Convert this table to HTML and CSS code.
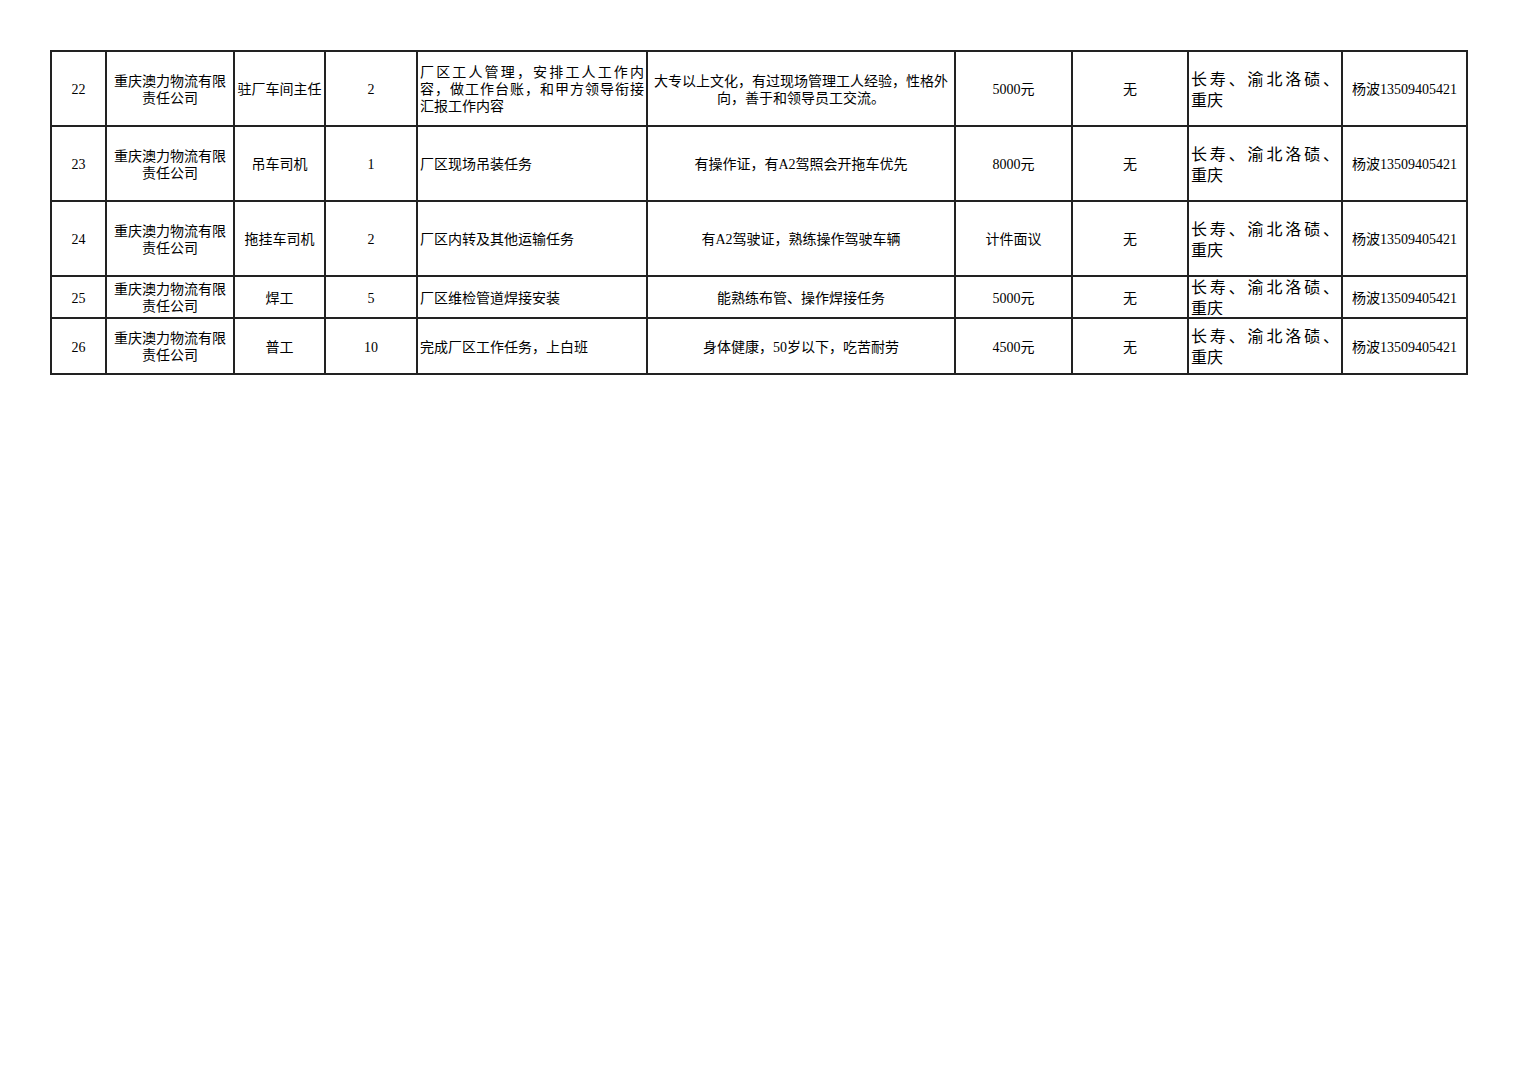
FILE: index.html
```html
<!DOCTYPE html>
<html lang="zh-CN">
<head>
<meta charset="utf-8">
<title>招聘信息</title>
<link rel="stylesheet" href="styles.css">
</head>
<body>
<table class="jobs">
  <colgroup>
    <col class="c1"><col class="c2"><col class="c3"><col class="c4"><col class="c5">
    <col class="c6"><col class="c7"><col class="c8"><col class="c9"><col class="c10">
  </colgroup>
  <tbody>
    <tr class="r-tall">
      <td>22</td>
      <td>重庆澳力物流有限<br>责任公司</td>
      <td>驻厂车间主任</td>
      <td>2</td>
      <td class="left"><span class="j">厂区工人管理，安排工人工作内</span><span class="j">容，做工作台账，和甲方领导衔接</span>汇报工作内容</td>
      <td>大专以上文化，有过现场管理工人经验，性格外<br>向，善于和领导员工交流。</td>
      <td>5000元</td>
      <td>无</td>
      <td class="loc"><span class="j">长寿、渝北洛碛、</span>重庆</td>
      <td>杨波13509405421</td>
    </tr>
    <tr class="r-tall">
      <td>23</td>
      <td>重庆澳力物流有限<br>责任公司</td>
      <td>吊车司机</td>
      <td>1</td>
      <td class="left">厂区现场吊装任务</td>
      <td>有操作证，有A2驾照会开拖车优先</td>
      <td>8000元</td>
      <td>无</td>
      <td class="loc"><span class="j">长寿、渝北洛碛、</span>重庆</td>
      <td>杨波13509405421</td>
    </tr>
    <tr class="r-tall">
      <td>24</td>
      <td>重庆澳力物流有限<br>责任公司</td>
      <td>拖挂车司机</td>
      <td>2</td>
      <td class="left">厂区内转及其他运输任务</td>
      <td>有A2驾驶证，熟练操作驾驶车辆</td>
      <td>计件面议</td>
      <td>无</td>
      <td class="loc"><span class="j">长寿、渝北洛碛、</span>重庆</td>
      <td>杨波13509405421</td>
    </tr>
    <tr class="r-short">
      <td>25</td>
      <td>重庆澳力物流有限<br>责任公司</td>
      <td>焊工</td>
      <td>5</td>
      <td class="left">厂区维检管道焊接安装</td>
      <td>能熟练布管、操作焊接任务</td>
      <td>5000元</td>
      <td>无</td>
      <td class="loc tight"><div class="clip"><span class="j">长寿、渝北洛碛、</span>重庆</div></td>
      <td>杨波13509405421</td>
    </tr>
    <tr class="r-mid">
      <td>26</td>
      <td>重庆澳力物流有限<br>责任公司</td>
      <td>普工</td>
      <td>10</td>
      <td class="left">完成厂区工作任务，上白班</td>
      <td>身体健康，50岁以下，吃苦耐劳</td>
      <td>4500元</td>
      <td>无</td>
      <td class="loc"><span class="j">长寿、渝北洛碛、</span>重庆</td>
      <td>杨波13509405421</td>
    </tr>
  </tbody>
</table>
</body>
</html>
```

FILE: styles.css
```css
html, body {
  margin: 0;
  padding: 0;
  background: #ffffff;
}

body {
  font-family: "Liberation Serif", "Noto Sans CJK SC", serif;
  color: #000000;
}

.jobs {
  margin: 50px 0 0 50px;
  border-collapse: collapse;
  table-layout: fixed;
  width: 1416px;
}

.c1 { width: 55px; }
.c2 { width: 128px; }
.c3 { width: 91px; }
.c4 { width: 92px; }
.c5 { width: 230px; }
.c6 { width: 308px; }
.c7 { width: 117px; }
.c8 { width: 116px; }
.c9 { width: 154px; }
.c10 { width: 125px; }

.jobs td {
  border: 2px solid #222222;
  padding: 2px 2px 0 2px;
  text-align: center;
  vertical-align: middle;
  font-size: 14px;
  line-height: 17px;
  white-space: nowrap;
  overflow: hidden;
}

.r-tall { height: 75px; }
.r-short { height: 42px; }
.r-mid { height: 56px; }

.jobs td.left {
  text-align: left;
  padding-left: 2px;
}

.jobs td.loc {
  text-align: left;
  font-size: 16px;
  line-height: 21px;
  padding: 2px 2px 0 2px;
}

.jobs td.loc.tight {
  padding: 0 2px;
  vertical-align: top;
}

.j {
  display: block;
  text-align: justify;
  text-align-last: justify;
}

.clip {
  height: 38px;
  overflow: hidden;
}
```
